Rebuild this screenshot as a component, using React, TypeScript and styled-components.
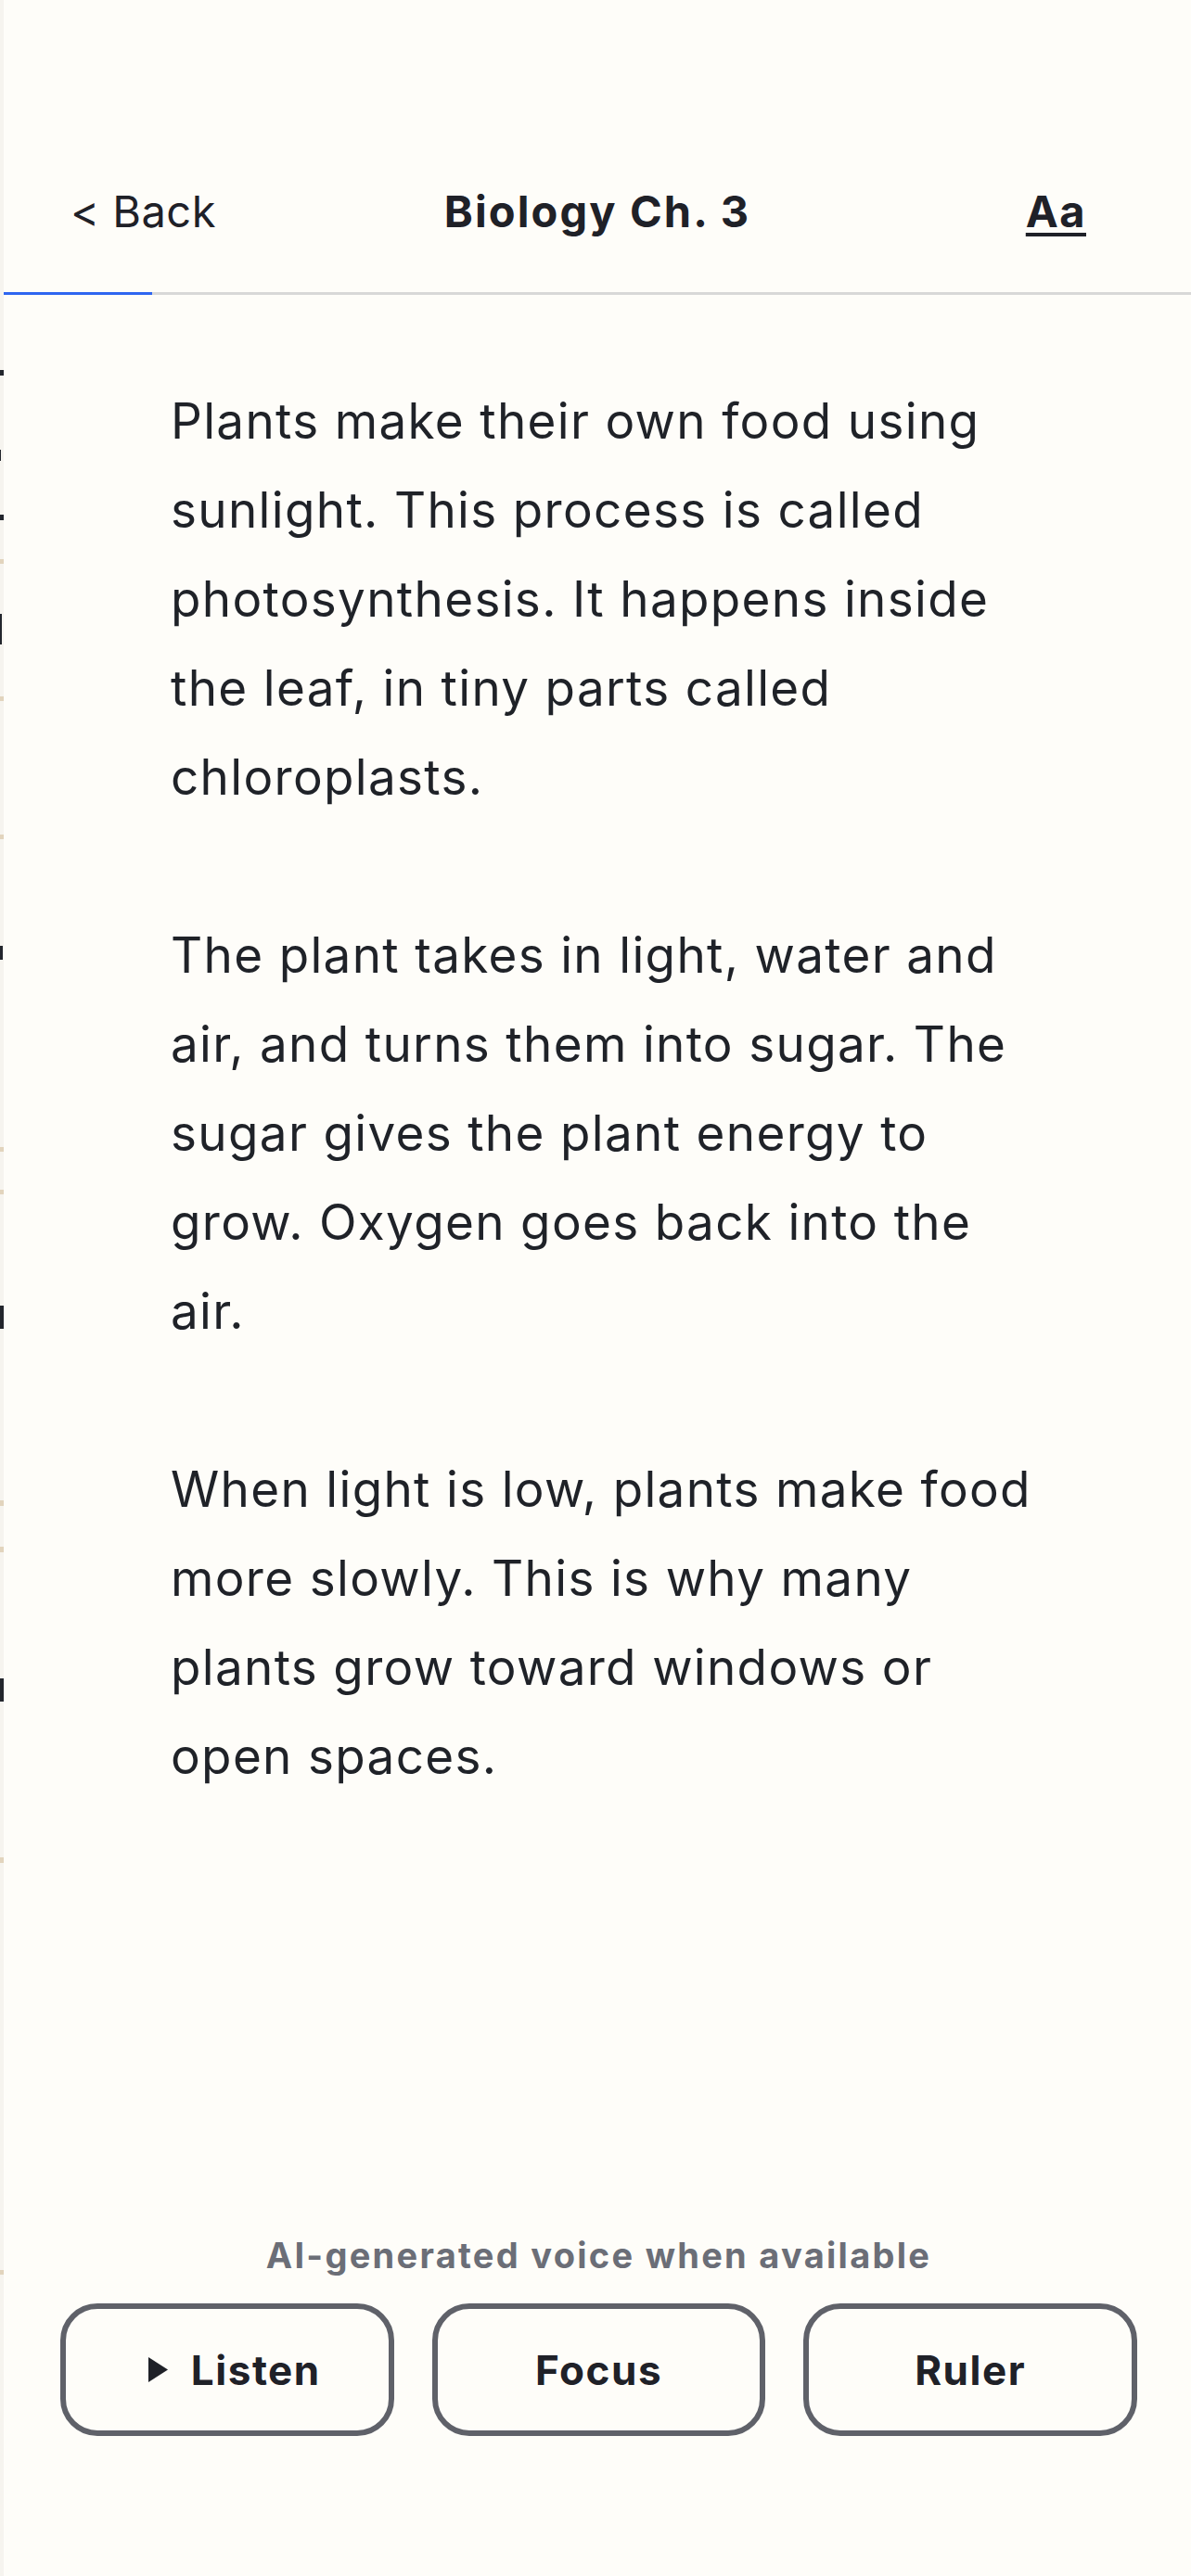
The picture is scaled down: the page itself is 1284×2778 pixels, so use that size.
import { createGlobalStyle, styled } from 'styled-components'

const GlobalStyle = createGlobalStyle`
	html, body {
		margin: 0;
		padding: 0;
		background: #fefdf9;
	}
	body {
		font-family: Inter, 'Noto Sans', sans-serif;
		color: #22252b;
	}
`

// bits of the previous page that peek in at the left edge
const peekMarks = [
	{ top: 399, height: 6, width: 4, color: '#23262d' },
	{ top: 485, height: 12, width: 1, color: '#23262d' },
	{ top: 555, height: 6, width: 4, color: '#23262d' },
	{ top: 603, height: 5, width: 4, color: '#e2d4bd' },
	{ top: 662, height: 33, width: 2, color: '#23262d' },
	{ top: 751, height: 5, width: 4, color: '#e2d4bd' },
	{ top: 900, height: 5, width: 4, color: '#e2d4bd' },
	{ top: 1020, height: 15, width: 3, color: '#23262d' },
	{ top: 1237, height: 5, width: 4, color: '#e2d4bd' },
	{ top: 1283, height: 5, width: 4, color: '#e2d4bd' },
	{ top: 1408, height: 25, width: 4, color: '#23262d' },
	{ top: 1618, height: 6, width: 4, color: '#e2d4bd' },
	{ top: 1668, height: 6, width: 4, color: '#e2d4bd' },
	{ top: 1810, height: 25, width: 4, color: '#23262d' },
	{ top: 2003, height: 6, width: 4, color: '#e2d4bd' },
	{ top: 2448, height: 5, width: 4, color: '#e2d4bd' },
]

const paragraphs = [
	'Plants make their own food using sunlight. This process is called photosynthesis. It happens inside the leaf, in tiny parts called chloroplasts.',
	'The plant takes in light, water and air, and turns them into sugar. The sugar gives the plant energy to grow. Oxygen goes back into the air.',
	'When light is low, plants make food more slowly. This is why many plants grow toward windows or open spaces.',
]

export default function App() {
	const progress = 12.5

	return (
		<>
			<GlobalStyle />
			<Screen>
				<PeekStrip>
					{peekMarks.map((m, i) => (
						<PeekMark
							key={i}
							style={{ top: m.top, height: m.height, width: m.width, background: m.color }}
						/>
					))}
				</PeekStrip>
				<Reader>
					<Header>
						<TopBar>
							<BackButton>&lt; Back</BackButton>
							<Title>Biology Ch. 3</Title>
							<FontButton>Aa</FontButton>
						</TopBar>
						<ProgressTrack>
							<ProgressFill style={{ width: `${progress}%` }} />
						</ProgressTrack>
					</Header>

					<Article>
						{paragraphs.map((p, i) => (
							<Paragraph key={i}>{p}</Paragraph>
						))}
					</Article>

					<Footer>
						<Caption>AI-generated voice when available</Caption>
						<Toolbar>
							<ToolButton $shift={8}>
								<PlayIcon viewBox="0 0 21 27">
									<polygon points="0,0 21,13.5 0,27" fill="currentColor" />
								</PlayIcon>
								Listen
							</ToolButton>
							<ToolButton>Focus</ToolButton>
							<ToolButton>Ruler</ToolButton>
						</Toolbar>
					</Footer>
				</Reader>
			</Screen>
		</>
	)
}

const Screen = styled.div`
	display: flex;
	min-height: 2778px;
	width: 1284px;
	background: #fefdf9;
`

const PeekStrip = styled.div`
	position: relative;
	width: 4px;
	flex-shrink: 0;
	background: #f6f4ef;
	overflow: hidden;
`

const PeekMark = styled.span`
	position: absolute;
	left: 0;
	display: block;
`

const Reader = styled.div`
	flex: 1;
	display: flex;
	flex-direction: column;
`

const Header = styled.header`
	padding-top: 140px;
`

const TopBar = styled.div`
	display: grid;
	grid-template-columns: 1fr auto 1fr;
	align-items: center;
	height: 175px;
	font-size: 47px;
	color: #1f2128;
`

const BackButton = styled.div`
	justify-self: start;
	padding-left: 72px;
	font-weight: 400;
	letter-spacing: 0.01em;
`

const Title = styled.div`
	font-weight: 700;
	letter-spacing: 0.045em;
`

const FontButton = styled.div`
	justify-self: end;
	padding-right: 113px;
	font-weight: 700;
	letter-spacing: 0.03em;
	text-decoration: underline;
	text-decoration-thickness: 4px;
	text-underline-offset: 6px;
`

const ProgressTrack = styled.div`
	height: 3px;
	background: #d8d8d8;
`

const ProgressFill = styled.div`
	height: 100%;
	background: #2f66f0;
`

const Article = styled.main`
	padding: 88px 0 0 180px;
	width: 928px;
`

const Paragraph = styled.p`
	margin: 0 0 96px;
	font-size: 53px;
	line-height: 96px;
	letter-spacing: 0.025em;
	color: #1f2228;
`

const Footer = styled.footer`
	margin-top: auto;
	padding: 0 58px 151px 61px;
	display: flex;
	flex-direction: column;
	align-items: center;
`

const Caption = styled.div`
	font-size: 38px;
	line-height: 44px;
	font-weight: 700;
	letter-spacing: 0.06em;
	color: #6b6e77;
	margin-bottom: 30px;
`

const Toolbar = styled.div`
	display: grid;
	grid-template-columns: repeat(3, 1fr);
	gap: 41px;
	width: 100%;
`

const ToolButton = styled.button<{ $shift?: number }>`
	height: 143px;
	box-sizing: border-box;
	border: 6px solid #5f6169;
	border-radius: 40px;
	background: transparent;
	display: flex;
	align-items: center;
	justify-content: center;
	gap: 25px;
	font-family: Inter, 'Noto Sans', sans-serif;
	font-size: 44px;
	font-weight: 700;
	letter-spacing: 0.035em;
	color: #1f2128;
	padding: 0 0 0 ${(p) => (p.$shift ?? 0) * 2}px;
`

const PlayIcon = styled.svg`
	width: 21px;
	height: 27px;
`
